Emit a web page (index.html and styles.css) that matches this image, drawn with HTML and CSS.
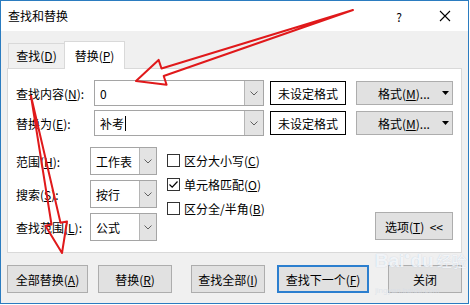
FILE: index.html
```html
<!DOCTYPE html>
<html>
<head>
<meta charset="utf-8">
<link rel="stylesheet" href="styles.css">
</head>
<body>
<div class="win">
  <div class="titlebar">
    <span class="title">查找和替换</span>
    <span class="tbtn help">?</span>
    <span class="tbtn close"><svg width="12" height="12" viewBox="0 0 12 12"><path d="M1 1L11 11M11 1L1 11" stroke="#000" stroke-width="1.1"/></svg></span>
  </div>
  <div class="body">
    <div class="tabs">
      <div class="tab">查找(<u>D</u>)</div>
      <div class="tab active">替换(<u>P</u>)</div>
    </div>
    <div class="panel">
      <div class="row">
        <span class="lbl1">查找内容(<u>N</u>):</span>
        <div class="combo wide"><span class="val">0</span><span class="dd"><svg width="8" height="5" viewBox="0 0 8 5"><path d="M0.5 0.5L4 4L7.5 0.5" fill="none" stroke="#606060"/></svg></span></div>
        <div class="fmtbox">未设定格式</div>
        <div class="fmtbtn"><span>格式(<u>M</u>)...</span><svg class="tri" width="7" height="4" viewBox="0 0 7 4"><path d="M0 0H7L3.5 4Z" fill="#000"/></svg></div>
      </div>
      <div class="row">
        <span class="lbl1">替换为(<u>E</u>):</span>
        <div class="combo wide"><span class="val">补考<span class="caret"></span></span><span class="dd"><svg width="8" height="5" viewBox="0 0 8 5"><path d="M0.5 0.5L4 4L7.5 0.5" fill="none" stroke="#606060"/></svg></span></div>
        <div class="fmtbox">未设定格式</div>
        <div class="fmtbtn"><span>格式(<u>M</u>)...</span><svg class="tri" width="7" height="4" viewBox="0 0 7 4"><path d="M0 0H7L3.5 4Z" fill="#000"/></svg></div>
      </div>
      <div class="opts">
        <div class="optcol">
          <div class="optrow"><span class="lbl2">范围(<u>H</u>):</span><div class="combo small"><span class="val">工作表</span><span class="dd"><svg width="8" height="5" viewBox="0 0 8 5"><path d="M0.5 0.5L4 4L7.5 0.5" fill="none" stroke="#606060"/></svg></span></div></div>
          <div class="optrow"><span class="lbl2">搜索(<u>S</u>):</span><div class="combo small"><span class="val">按行</span><span class="dd"><svg width="8" height="5" viewBox="0 0 8 5"><path d="M0.5 0.5L4 4L7.5 0.5" fill="none" stroke="#606060"/></svg></span></div></div>
          <div class="optrow"><span class="lbl2">查找范围(<u>L</u>):</span><div class="combo small"><span class="val">公式</span><span class="dd"><svg width="8" height="5" viewBox="0 0 8 5"><path d="M0.5 0.5L4 4L7.5 0.5" fill="none" stroke="#606060"/></svg></span></div></div>
        </div>
        <div class="checks">
          <div class="chk"><span class="box"></span>区分大小写(<u>C</u>)</div>
          <div class="chk"><span class="box"><svg width="11" height="11" viewBox="0 0 11 11"><path d="M1.5 5.5L4.2 8.2L9.5 2.5" fill="none" stroke="#000" stroke-width="1.2"/></svg></span>单元格匹配(<u>O</u>)</div>
          <div class="chk"><span class="box"></span>区分全/半角(<u>B</u>)</div>
        </div>
        <div class="btn optbtn">选项(<u>T</u>)&nbsp;&nbsp;&lt;&lt;</div>
      </div>
    </div>
    <div class="buttons">
      <div class="btn b1">全部替换(<u>A</u>)</div>
      <div class="btn b2">替换(<u>R</u>)</div>
      <div class="btn b3">查找全部(<u>I</u>)</div>
      <div class="btn b4 default">查找下一个(<u>F</u>)</div>
      <div class="btn b5">关闭</div>
    </div>
  </div>
  <div class="watermark">
    <div class="wm-line"><span class="wm-big">Bai</span><span class="wm-paw">●</span><span class="wm-big">du</span><span class="wm-cn">经验</span></div>
    <div class="wm-url">jingyan.baidu.com</div>
  </div>
</div>
<svg class="arrows" width="470" height="305" viewBox="0 0 470 305">
  <polygon points="353,10 161.5,68.5 158.6,59.9 136,81 166.6,84.7 163.7,76" fill="none" stroke="#e0191b" stroke-width="2" stroke-linejoin="round"/>
  <polygon points="31,96 51.5,224.5 45.4,225.7 62,253 67,221.5 60.5,222.8" fill="none" stroke="#e0191b" stroke-width="2" stroke-linejoin="round"/>
</svg>
</body>
</html>
```

FILE: styles.css
```css
body {
  margin: 0;
  font-family: "Noto Sans CJK SC", "Noto Sans", sans-serif;
  font-size: 12px;
  color: #000;
  background: #fff;
}
u {
  text-decoration: underline;
  text-underline-offset: 1px;
}
.win {
  position: relative;
  width: 467px;
  height: 302px;
  border: 1px solid #2b7cc0;
  background: #f0f0f0;
  display: flex;
  flex-direction: column;
}
.titlebar {
  height: 30px;
  background: #fff;
  display: flex;
  align-items: center;
}
.title {
  flex: 1;
  padding-left: 7px;
  line-height: 30px;
}
.tbtn {
  width: 46px;
  height: 30px;
  display: flex;
  align-items: center;
  justify-content: center;
}
.help {
  font-size: 12px;
}
.body {
  padding: 10px 6px 0;
}
.tabs {
  display: flex;
  align-items: flex-end;
  height: 27px;
  padding-left: 1px;
}
.tab {
  box-sizing: border-box;
  width: 56px;
  height: 25px;
  border: 1px solid #d9d9d9;
  border-right: none;
  border-bottom: none;
  display: flex;
  align-items: center;
  justify-content: center;
  line-height: 14px;
}
.tab.active {
  width: 61px;
  height: 28px;
  border-right: 1px solid #d9d9d9;
  background: #fff;
  margin-bottom: -1px;
  position: relative;
  z-index: 1;
}
.panel {
  box-sizing: border-box;
  width: 455px;
  height: 185px;
  border: 1px solid #d9d9d9;
  background: #fff;
  padding: 11px 0 0 8px;
}
.row {
  display: flex;
  align-items: center;
  height: 26px;
}
.row + .row {
  margin-top: 4px;
}
.lbl1 {
  width: 78px;
}
.lbl2 {
  width: 74px;
}
.combo {
  box-sizing: border-box;
  display: flex;
  border: 1px solid #a5a5a5;
  background: #fff;
  height: 26px;
}
.combo.wide {
  width: 170px;
}
.combo.small {
  width: 67px;
  height: 28px;
}
.val {
  flex: 1;
  padding-left: 5px;
  display: flex;
  align-items: center;
}
.caret {
  display: inline-block;
  width: 1px;
  height: 15px;
  background: #000;
  margin-left: 1px;
}
.dd {
  width: 18px;
  border-left: 1px solid #b5b5b5;
  background: #e3e3e3;
  display: flex;
  align-items: center;
  justify-content: center;
}
.combo.small .dd {
  width: 16px;
}
.fmtbox {
  box-sizing: border-box;
  width: 76px;
  height: 24px;
  border: 1px solid #000;
  margin-left: 6px;
  display: flex;
  align-items: center;
  justify-content: center;
}
.fmtbtn {
  box-sizing: border-box;
  width: 97px;
  height: 24px;
  margin-left: 10px;
  background: #e1e1e1;
  border: 1px solid #adadad;
  display: flex;
  align-items: center;
  padding-left: 21px;
  padding-right: 3px;
}
.fmtbtn .tri {
  margin-left: auto;
}
.opts {
  display: flex;
  margin-top: 11px;
}
.optcol {
  display: flex;
  flex-direction: column;
  gap: 5px;
}
.optrow {
  display: flex;
  align-items: center;
  height: 28px;
}
.checks {
  margin-left: 10px;
  display: flex;
  flex-direction: column;
  padding-top: 1px;
}
.chk {
  display: flex;
  align-items: center;
  height: 24px;
}
.box {
  box-sizing: border-box;
  width: 13px;
  height: 13px;
  border: 1px solid #333;
  background: #fff;
  margin-right: 4px;
  display: flex;
  align-items: center;
  justify-content: center;
}
.btn {
  box-sizing: border-box;
  height: 28px;
  background: #e1e1e1;
  border: 1px solid #adadad;
  display: flex;
  align-items: center;
  justify-content: center;
}
.optbtn {
  width: 78px;
  margin-left: auto;
  margin-right: 8px;
  align-self: flex-end;
  margin-bottom: 1px;
}
.buttons {
  display: flex;
  margin-top: 12px;
}
.b1 { width: 81px; }
.b2 { width: 74px; margin-left: 10px; }
.b3 { width: 74px; margin-left: 19px; }
.b4 { width: 92px; margin-left: 12px; }
.b5 { width: 74px; margin-left: 19px; }
.btn.default {
  border: 2px solid #2c7fcf;
}
.watermark {
  position: absolute;
  left: 374px;
  top: 248px;
  color: rgba(255, 255, 255, 0.8);
  text-shadow: 0 0 1px rgba(120, 150, 190, 0.45);
  font-family: "Liberation Sans", sans-serif;
  white-space: nowrap;
  pointer-events: none;
}
.wm-line {
  display: flex;
  align-items: flex-end;
  height: 22px;
  line-height: 20px;
}
.wm-big {
  font-size: 19px;
  font-weight: bold;
}
.wm-paw {
  font-size: 10px;
  line-height: 14px;
  align-self: flex-start;
}
.wm-cn {
  font-family: "Noto Sans CJK SC", sans-serif;
  font-size: 15px;
  margin-left: 3px;
}
.wm-url {
  margin-top: 15px;
  font-size: 8px;
  line-height: 9px;
  color: rgba(215, 222, 232, 0.7);
  text-shadow: none;
}
.arrows {
  position: absolute;
  left: 0;
  top: 0;
  pointer-events: none;
}
```
